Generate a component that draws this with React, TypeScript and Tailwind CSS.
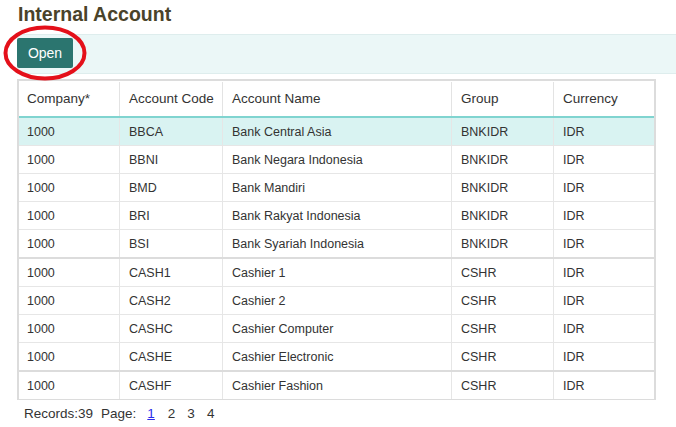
import React from "react";

const rows = [
  { company: "1000", code: "BBCA", name: "Bank Central Asia", group: "BNKIDR", currency: "IDR", active: true },
  { company: "1000", code: "BBNI", name: "Bank Negara Indonesia", group: "BNKIDR", currency: "IDR" },
  { company: "1000", code: "BMD", name: "Bank Mandiri", group: "BNKIDR", currency: "IDR" },
  { company: "1000", code: "BRI", name: "Bank Rakyat Indonesia", group: "BNKIDR", currency: "IDR" },
  { company: "1000", code: "BSI", name: "Bank Syariah Indonesia", group: "BNKIDR", currency: "IDR", thick: true },
  { company: "1000", code: "CASH1", name: "Cashier 1", group: "CSHR", currency: "IDR" },
  { company: "1000", code: "CASH2", name: "Cashier 2", group: "CSHR", currency: "IDR" },
  { company: "1000", code: "CASHC", name: "Cashier Computer", group: "CSHR", currency: "IDR" },
  { company: "1000", code: "CASHE", name: "Cashier Electronic", group: "CSHR", currency: "IDR", thick: true },
  { company: "1000", code: "CASHF", name: "Cashier Fashion", group: "CSHR", currency: "IDR" },
];

const cols = "grid grid-cols-[101px_103px_229px_102px_100px]";

export default function App() {
  return (
    <div className="relative w-[676px] h-[427px] overflow-hidden bg-white font-['Liberation_Sans',Arial,sans-serif] text-[#333]">
      <h1 className="pl-[18px] pt-[2px] text-[19.5px] leading-[24px] font-bold text-[#4a432a]">
        Internal Account
      </h1>

      {/* toolbar */}
      <div className="ml-[17px] mt-[8px] h-[40px] border-y border-[#deeded] bg-[#ebf7f7] pt-[3px]">
        <button className="h-[30px] w-[56px] rounded-[2px] bg-[#2b756f] pt-[1px] text-[14px] text-white">
          Open
        </button>
      </div>

      {/* grid */}
      <div className="ml-[17px] mt-[5px] w-[639px] border-x-2 border-t-2 border-b border-[#dcdcdc] text-[12.5px]">
        <div className={`${cols} h-[37px] border-b-2 border-[#80d4d0] pt-[1px] text-[13.5px]`}>
          <div className="flex items-center border-r border-[#e3e3e3] pl-[8px]">Company*</div>
          <div className="flex items-center border-r border-[#e3e3e3] pl-[9px]">Account Code</div>
          <div className="flex items-center border-r border-[#e3e3e3] pl-[9px]">Account Name</div>
          <div className="flex items-center border-r border-[#e3e3e3] pl-[9px]">Group</div>
          <div className="flex items-center pl-[9px]">Currency</div>
        </div>
        {rows.map((r, i) => (
          <div
            key={r.code}
            className={`${cols} ${
              i === rows.length - 1 ? "h-[27px]" : r.thick ? "h-[29px] border-b-2 border-[#dcdcdc]" : "h-[28px] border-b border-[#e6e6e6]"
            } ${r.active ? "bg-[#d9f3f2]" : ""}`}
          >
            <div className="flex items-center border-r border-[#e6e6e6] pl-[8px] pt-[1px]">{r.company}</div>
            <div className="flex items-center border-r border-[#e6e6e6] pl-[9px] pt-[1px]">{r.code}</div>
            <div className="flex items-center border-r border-[#e6e6e6] pl-[9px] pt-[1px]">{r.name}</div>
            <div className="flex items-center border-r border-[#e6e6e6] pl-[9px] pt-[1px]">{r.group}</div>
            <div className="flex items-center pl-[9px] pt-[1px]">{r.currency}</div>
          </div>
        ))}
      </div>

      {/* pager */}
      <div className="ml-[24px] mt-[5px] flex h-[18px] items-center text-[13.5px] text-[#333]">
        <span>Records:39</span>
        <span className="ml-[8px]">Page:</span>
        <a href="#" className="ml-[11px] text-[#2b2bea] underline">1</a>
        <span className="ml-[13px]">2</span>
        <span className="ml-[12px]">3</span>
        <span className="ml-[12px]">4</span>
      </div>

      {/* red annotation */}
      <svg className="absolute left-[3px] top-[25px]" width="84" height="56" viewBox="0 0 84 56">
        <ellipse cx="42" cy="28" rx="39.5" ry="25.5" fill="none" stroke="#e4101a" strokeWidth="4" />
      </svg>
    </div>
  );
}
